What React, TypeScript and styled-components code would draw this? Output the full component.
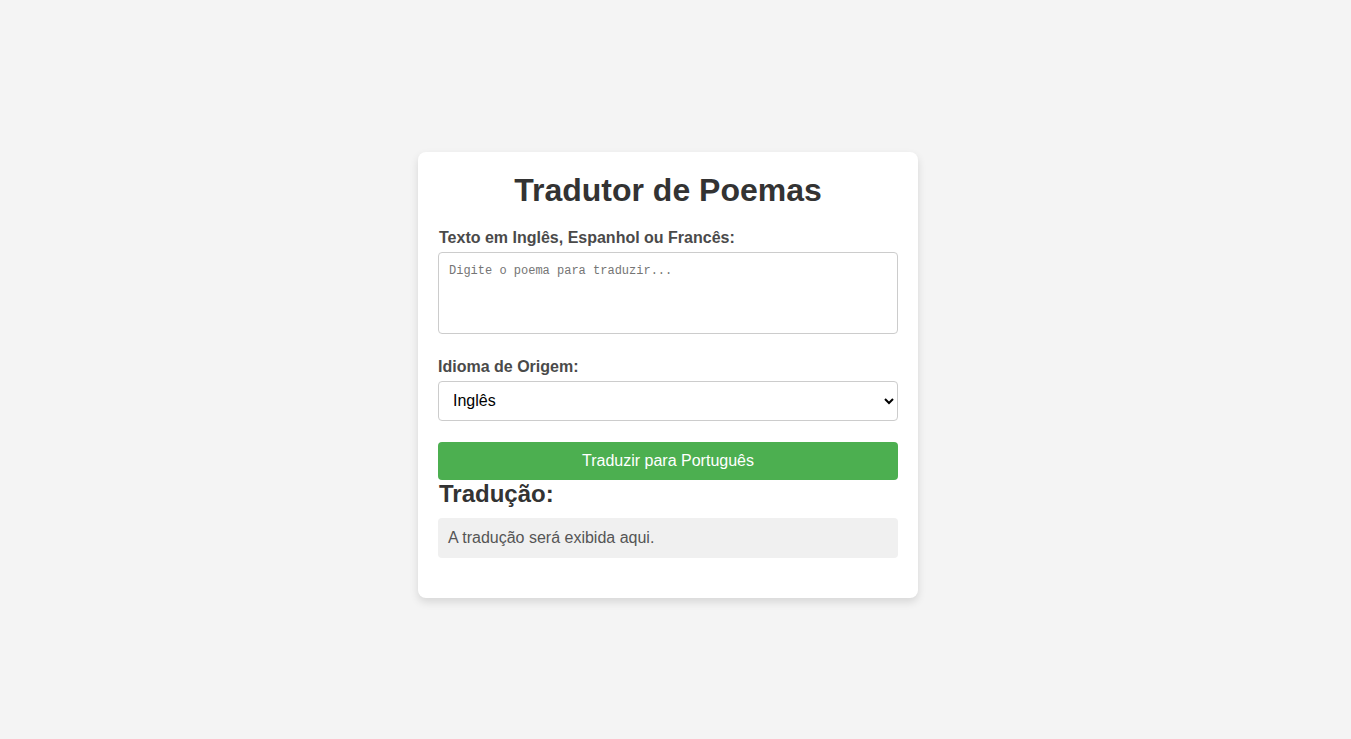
import React from "react";
import styled, { createGlobalStyle } from "styled-components";

const GlobalStyle = createGlobalStyle`
  html, body { margin: 0; padding: 0; background: #f4f4f4; }
  body { font-family: "Liberation Sans", Arial, sans-serif; }
  * { box-sizing: border-box; }
`;

const Page = styled.div`
  min-height: 739px;
  display: flex;
  justify-content: center;
  align-items: flex-start;
  padding: 152px 15px 0 0;
`;

const Card = styled.div`
  width: 500px;
  background: #fff;
  border-radius: 8px;
  box-shadow: 0 4px 8px rgba(0, 0, 0, 0.12);
  padding: 20px 20px 40px;
  display: flex;
  flex-direction: column;
`;

const Title = styled.h1`
  margin: 0 0 20px;
  font-size: 32px;
  font-weight: bold;
  color: #333;
  text-align: center;
  line-height: 36.8px;
`;

const Field = styled.div<{ $gap: number }>`
  display: flex;
  flex-direction: column;
  margin-bottom: ${(p) => p.$gap}px;
`;

const Label = styled.label<{ $indent?: number; $gap?: number }>`
  font-size: 16px;
  font-weight: bold;
  color: #4a4a4a;
  line-height: 18.4px;
  margin-bottom: ${(p) => p.$gap ?? 5}px;
  padding-left: ${(p) => p.$indent ?? 0}px;
`;

const TextArea = styled.textarea`
  display: block;
  width: 100%;
  height: 82px;
  padding: 11px 10px 10px;
  border: 1px solid #ccc;
  border-radius: 4px;
  font-family: "Liberation Mono", monospace;
  font-size: 12px;
  resize: none;
  background: #fff;
  &::placeholder { color: #757575; }
`;

const Select = styled.select`
  display: block;
  width: 100%;
  height: 40px;
  padding: 0 10px;
  border: 1px solid #ccc;
  border-radius: 4px;
  font-family: "Liberation Sans", Arial, sans-serif;
  font-size: 16px;
  color: #000;
  background: #fff;
`;

const Button = styled.button`
  width: 100%;
  height: 38px;
  border: none;
  border-radius: 4px;
  background: #4caf50;
  color: #fff;
  font-family: "Liberation Sans", Arial, sans-serif;
  font-size: 16px;
  cursor: pointer;
`;

const SubTitle = styled.h2`
  margin: 0 0 11px;
  font-size: 24px;
  font-weight: bold;
  color: #333;
  line-height: 27.6px;
  padding-left: 1px;
`;

const Output = styled.div`
  background: #f0f0f0;
  border-radius: 4px;
  padding: 10px;
  min-height: 40px;
  font-size: 16px;
  line-height: 20px;
  color: #555;
`;

export default function App() {
  return (
    <>
      <GlobalStyle />
      <Page>
        <Card>
          <Title>Tradutor de Poemas</Title>
          <Field $gap={24}>
            <Label $indent={1} htmlFor="poem">Texto em Inglês, Espanhol ou Francês:</Label>
            <TextArea id="poem" placeholder="Digite o poema para traduzir..." />
          </Field>
          <Field $gap={21}>
            <Label $gap={4} htmlFor="lang">Idioma de Origem:</Label>
            <Select id="lang" defaultValue="en">
              <option value="en">Inglês</option>
              <option value="es">Espanhol</option>
              <option value="fr">Francês</option>
            </Select>
          </Field>
          <Button>Traduzir para Português</Button>
          <SubTitle>Tradução:</SubTitle>
          <Output>A tradução será exibida aqui.</Output>
        </Card>
      </Page>
    </>
  );
}
